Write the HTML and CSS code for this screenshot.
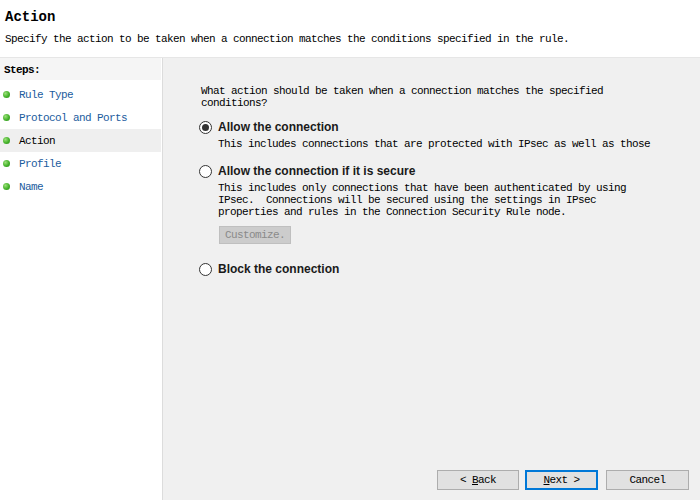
FILE: index.html
```html
<!DOCTYPE html>
<html>
<head>
<meta charset="utf-8">
<link rel="stylesheet" href="styles.css">
</head>
<body>
<div class="window">
  <header class="header">
    <div class="title">Action</div>
    <div class="subtitle">Specify the action to be taken when a connection matches the conditions specified in the rule.</div>
  </header>
  <div class="body">
    <nav class="steps">
      <div class="steps-head">Steps:</div>
      <div class="step"><span class="dot"></span><span class="step-link">Rule Type</span></div>
      <div class="step"><span class="dot"></span><span class="step-link">Protocol and Ports</span></div>
      <div class="step current"><span class="dot"></span><span class="step-text">Action</span></div>
      <div class="step"><span class="dot"></span><span class="step-link">Profile</span></div>
      <div class="step"><span class="dot"></span><span class="step-link">Name</span></div>
    </nav>
    <main class="content">
      <div class="question">What action should be taken when a connection matches the specified
conditions?</div>
      <div class="option first">
        <span class="radio checked"></span>
        <span class="option-label">Allow the connection</span>
      </div>
      <div class="desc">This includes connections that are protected with IPsec as well as those</div>
      <div class="option second">
        <span class="radio"></span>
        <span class="option-label">Allow the connection if it is secure</span>
      </div>
      <div class="desc">This includes only connections that have been authenticated by using
IPsec.  Connections will be secured using the settings in IPsec
properties and rules in the Connection Security Rule node.</div>
      <div class="customize-row"><button class="customize" disabled>Customize.</button></div>
      <div class="option third">
        <span class="radio"></span>
        <span class="option-label">Block the connection</span>
      </div>
      <div class="footer">
        <button class="btn back">&lt; <u>B</u>ack</button>
        <button class="btn default"><u>N</u>ext &gt;</button>
        <button class="btn cancel">Cancel</button>
      </div>
    </main>
  </div>
</div>
</body>
</html>
```

FILE: styles.css
```css
html, body {
  margin: 0;
  padding: 0;
}
body {
  width: 700px;
  height: 500px;
  overflow: hidden;
  background: #f0f0f0;
  font-family: "Liberation Mono", "DejaVu Sans Mono", monospace;
  font-size: 11px;
  letter-spacing: -0.6px;
  color: #000;
}
.window {
  display: flex;
  flex-direction: column;
  height: 500px;
}
.header {
  height: 57px;
  background: #fff;
  border-bottom: 1px solid #e6e6e6;
  padding-left: 5px;
  box-sizing: content-box;
}
.title {
  font-size: 14px;
  font-weight: bold;
  letter-spacing: 0;
  line-height: 16px;
  padding-top: 9px;
}
.subtitle {
  line-height: 12px;
  margin-top: 8px;
}
.body {
  flex: 1;
  display: flex;
  min-height: 0;
}
.steps {
  width: 161px;
  background: #fff;
  border-right: 1px solid #fff;
  box-shadow: 1px 0 0 #dcdcdc;
  margin-right: 2px;
}
.steps-head {
  height: 22px;
  line-height: 25px;
  background: #f5f5f5;
  font-weight: bold;
  padding-left: 4px;
}
.step {
  height: 23px;
  display: flex;
  align-items: center;
  padding-left: 3px;
}
.steps-head + .step {
  margin-top: 3px;
}
.step.current {
  background: #efefef;
}
.dot {
  width: 7px;
  height: 7px;
  border-radius: 50%;
  background: radial-gradient(circle at 35% 35%, #9be07a 0%, #44b22a 55%, #2b8a18 100%);
  margin-right: 9px;
}
.step-link {
  color: #1b5c9e;
}
.step-text {
  color: #000;
}
.content {
  flex: 1;
  display: flex;
  flex-direction: column;
  padding: 27px 11px 10px 37px;
}
.question {
  white-space: pre;
  line-height: 12px;
}
.option {
  display: flex;
  align-items: center;
  height: 14px;
  margin-left: -2px;
}
.option.first { margin-top: 11px; }
.option.second { margin-top: 14px; }
.option.third { margin-top: 18px; }
.radio {
  width: 11px;
  height: 11px;
  border: 1px solid #333;
  border-radius: 50%;
  background: #fff;
  margin-right: 6px;
  position: relative;
  flex: none;
}
.radio.checked::after {
  content: "";
  position: absolute;
  left: 2px;
  top: 2px;
  width: 7px;
  height: 7px;
  border-radius: 50%;
  background: #333;
}
.option-label {
  font-family: "Liberation Sans", Arial, sans-serif;
  font-weight: bold;
  font-size: 12px;
  letter-spacing: 0;
  color: #1a1a1a;
}
.desc {
  white-space: pre;
  line-height: 12px;
  margin-left: 17px;
  margin-top: 4px;
}
.customize-row {
  margin-left: 18px;
  margin-top: 8px;
}
.customize {
  font-family: inherit;
  font-size: 11px;
  letter-spacing: -0.6px;
  height: 18px;
  width: 72px;
  padding: 0;
  background: #cccccc;
  border: 1px solid #bfbfbf;
  color: #8a8a8a;
  text-align: center;
}
.footer {
  margin-top: auto;
  display: flex;
  justify-content: flex-end;
}
.btn {
  font-family: inherit;
  font-size: 11px;
  letter-spacing: -0.6px;
  height: 20px;
  width: 83px;
  padding: 0;
  background: #e1e1e1;
  border: 1px solid #adadad;
  color: #000;
}
.btn.back {
  width: 82px;
}
.btn.default {
  width: 73px;
  margin-left: 6px;
  border: 2px solid #0078d7;
}
.btn.cancel {
  margin-left: 8px;
}
```
